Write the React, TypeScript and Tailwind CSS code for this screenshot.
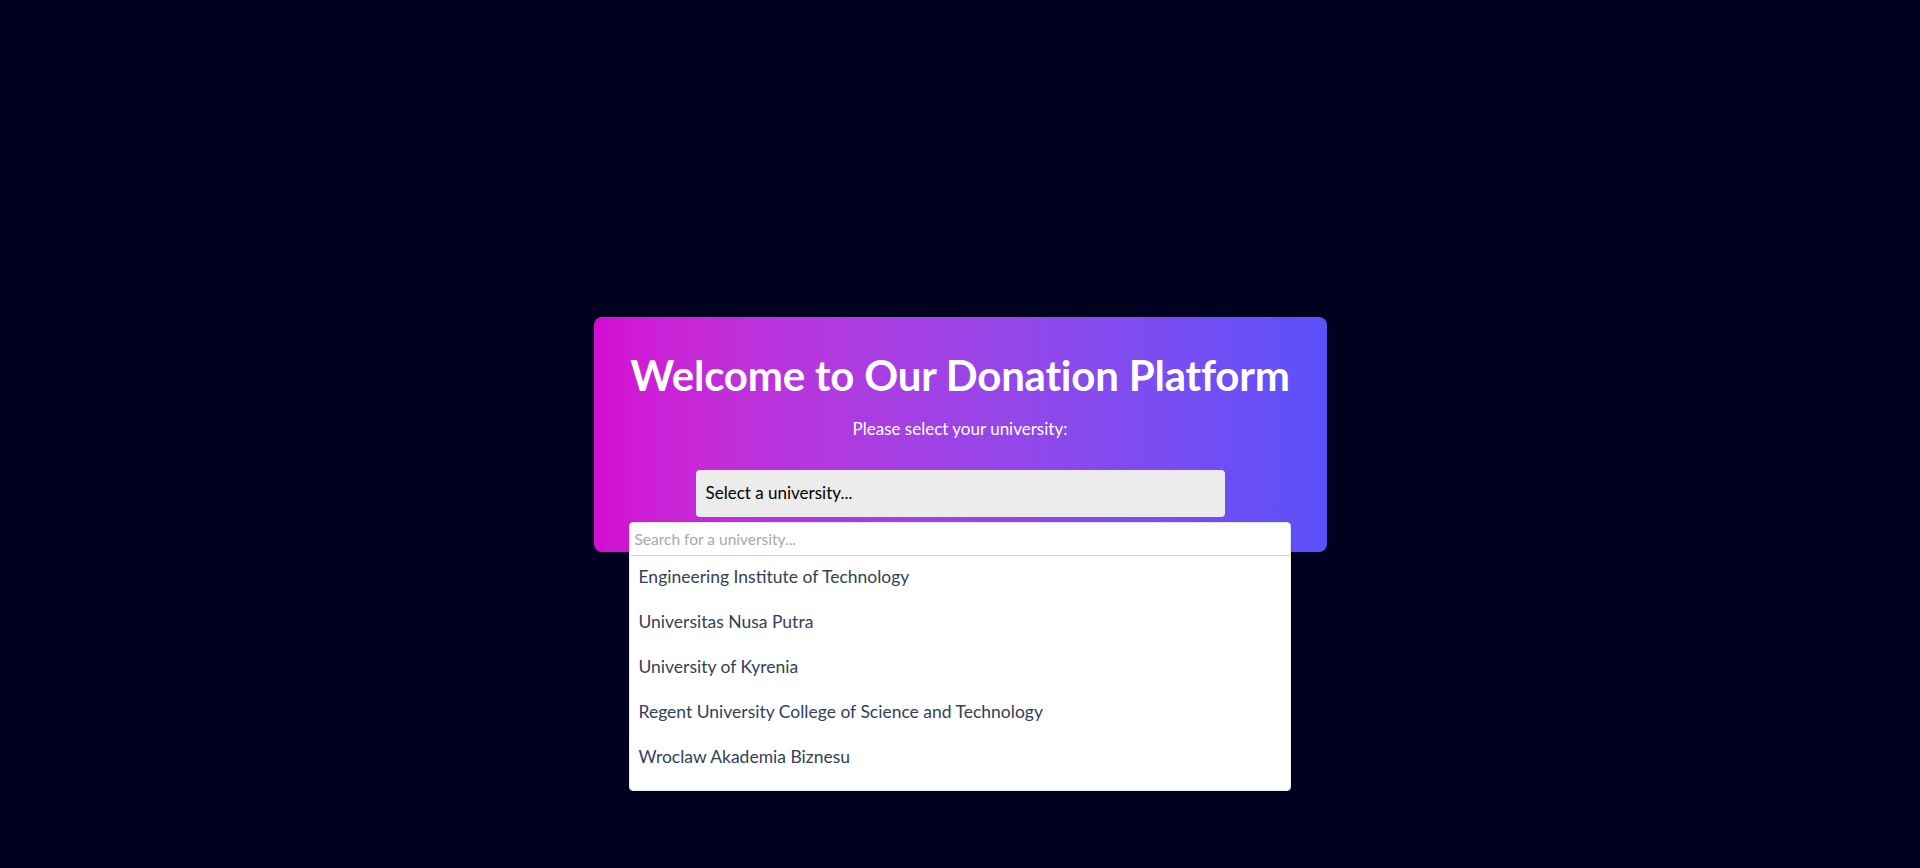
import React, { useState } from 'react';

const universities = [
    'Engineering Institute of Technology',
    'Universitas Nusa Putra',
    'University of Kyrenia',
    'Regent University College of Science and Technology',
    'Wroclaw Akademia Biznesu',
];

export default function App() {
    const [query, setQuery] = useState('');

    const filtered = universities.filter((u) => u.toLowerCase().includes(query.toLowerCase()));

    return (
        <div className="min-h-screen w-full bg-[#00001f] flex items-center justify-center font-['Lato',sans-serif]">
            <div className="relative w-[733px] rounded-lg bg-linear-to-r from-[#d40ad2] to-[#5a50fa] px-8 pt-8 pb-[35px] text-center text-white">
                <h1 className="mt-[2px] text-[42px] leading-[48px] font-bold tracking-[-0.2px]">Welcome to Our Donation Platform</h1>
                <p className="mt-[18px] text-[17px] leading-6">Please select your university:</p>

                <div className="mt-[29px] mx-auto w-[529px] h-[47px] rounded bg-[#ececec] px-[10px] flex items-center text-left text-[17px] text-black">
                    Select a university...
                </div>

                {/* Dropdown panel */}
                <div className="absolute left-[35px] top-[205px] w-[662px] rounded bg-white border border-gray-200 shadow-sm text-left pb-[10px]">
                    <input
                        value={query}
                        onChange={(e) => setQuery(e.target.value)}
                        placeholder="Search for a university..."
                        className="w-full h-[33px] px-[5px] border-b border-[#d4d4dc] text-[15.5px] text-gray-700 placeholder:text-[#a8a8b4] outline-none rounded-t"
                    />
                    <ul className="-mt-px">
                        {filtered.map((u) => (
                            <li key={u} className="h-[45px] px-[9px] flex items-center text-[17.5px] text-[#334155] cursor-pointer hover:bg-gray-100">
                                {u}
                            </li>
                        ))}
                    </ul>
                </div>
            </div>
        </div>
    );
}
